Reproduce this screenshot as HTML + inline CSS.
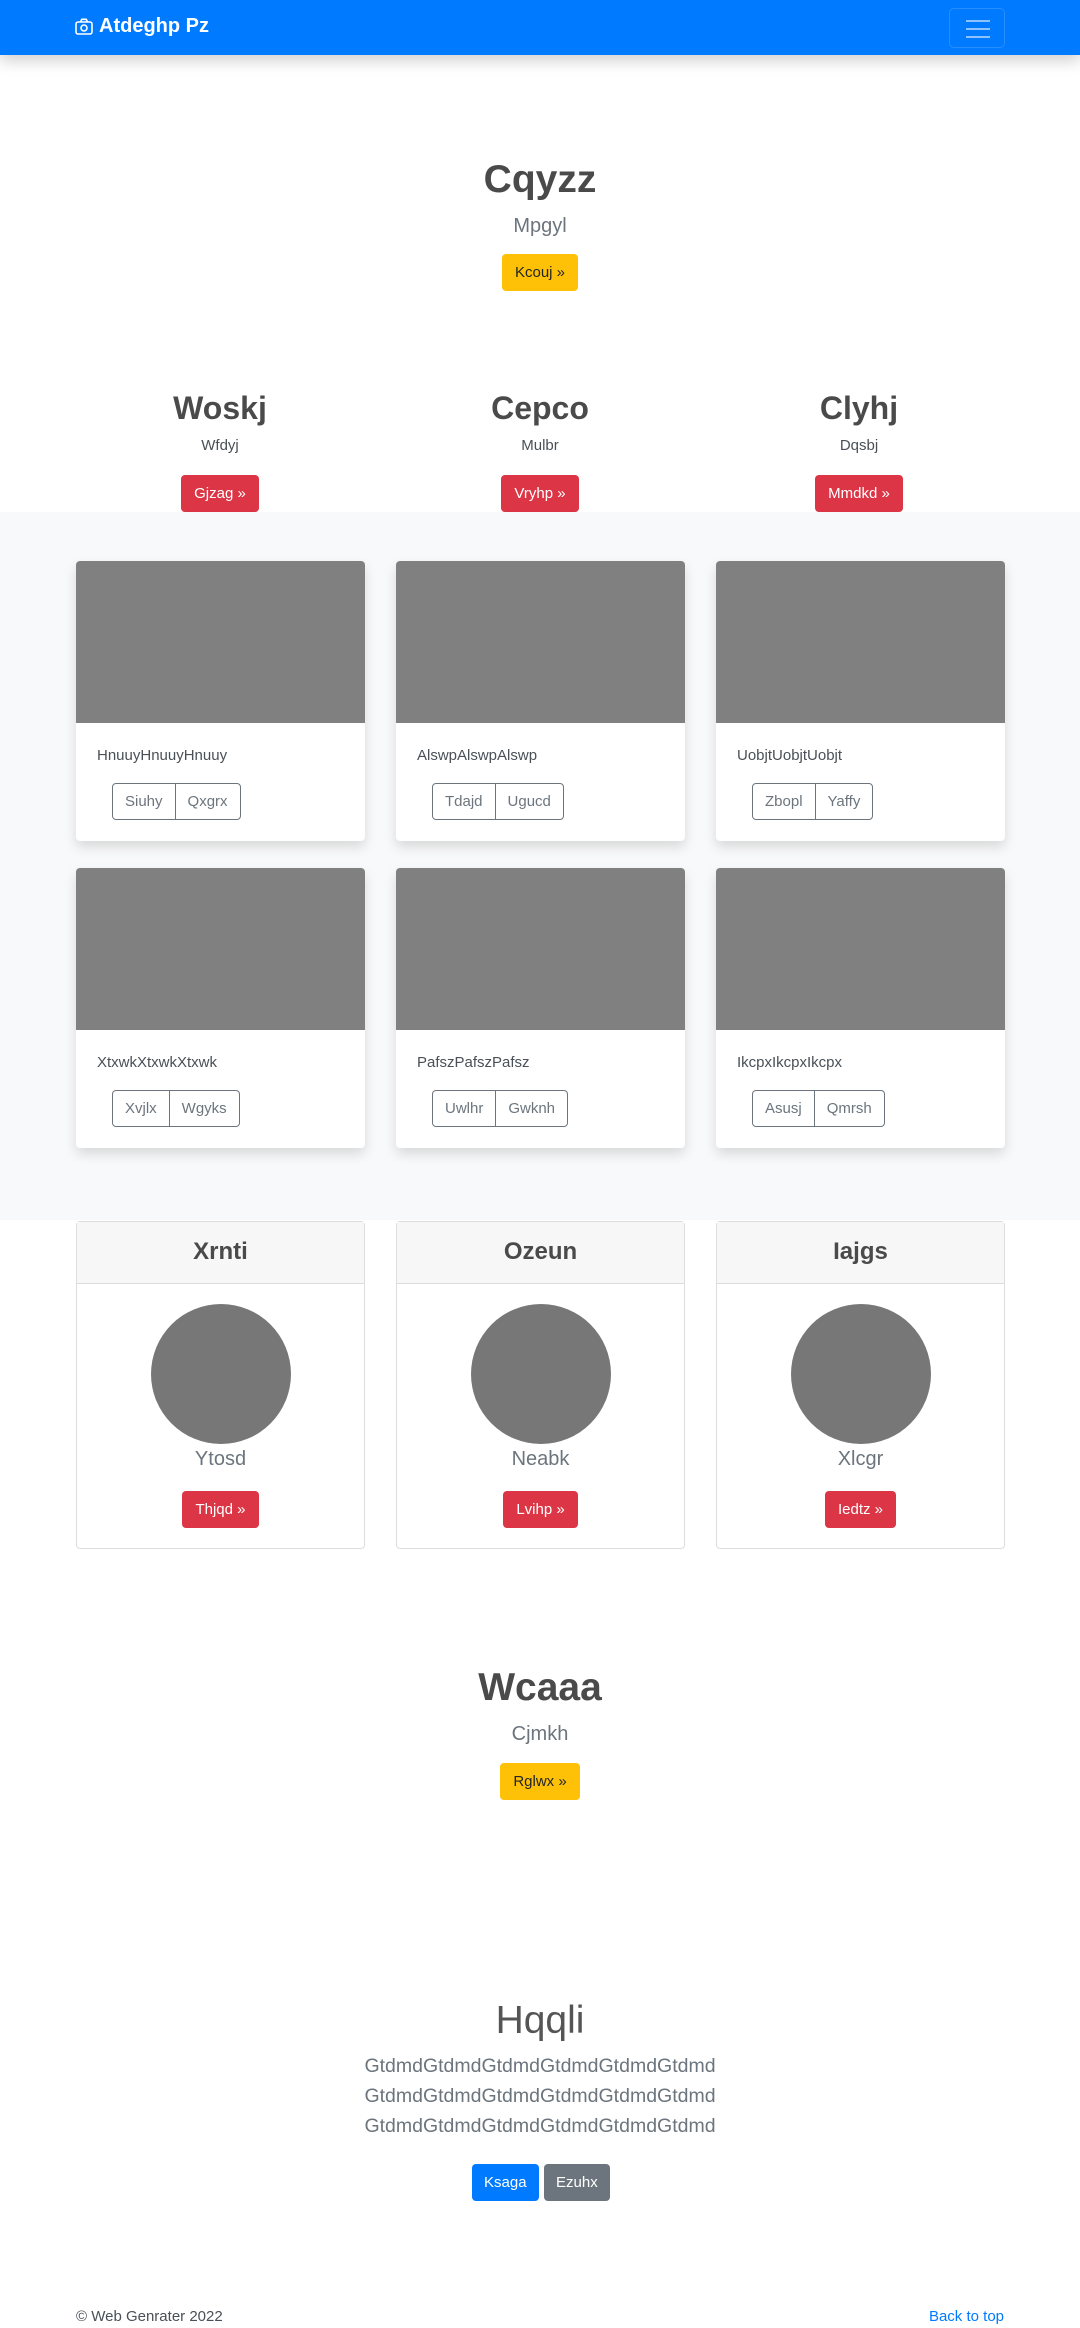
<!DOCTYPE html>
<html><head><meta charset="utf-8">
<style>
*{box-sizing:border-box;margin:0;padding:0}
body{width:1080px;height:2328px;overflow:hidden;background:#fff;font-family:"Liberation Sans",sans-serif;color:#212529;position:relative}
.abs{position:absolute}
.c{text-align:center}
nav{position:absolute;left:0;top:0;width:1080px;height:55px;background:#007bff;box-shadow:0 6px 14px rgba(0,0,0,.18);z-index:5}
.brand{position:absolute;left:75px;top:15px;color:#fff;font-weight:bold;font-size:20px;display:flex;align-items:center;gap:6px}
.tog{position:absolute;left:949px;top:8px;width:56px;height:40px;border:1px solid rgba(255,255,255,.15);border-radius:5px}
.tog i{position:absolute;left:16px;width:24px;height:2px;background:rgba(255,255,255,.55)}
.btn{display:inline-block;border-radius:4px;font-size:15px;line-height:37px;height:37px;padding:0 13px}
.y{background:#ffc107;color:#212529}
.r{background:#dc3545;color:#fff}
.h1{font-size:39px;font-weight:bold;color:#4a4a4a}
.lead{font-size:20px;color:#6c757d;font-weight:300}
.h2{font-size:32px;font-weight:bold;color:#4a4a4a}
.gray{position:absolute;left:0;top:512px;width:1080px;height:708px;background:#f8f9fa}
.card{position:absolute;width:289px;height:280px;background:#fff;border-radius:4px;box-shadow:0 6px 12px rgba(0,0,0,.13);overflow:hidden}
.card .img{height:162px;background:#808080}
.card .t{position:absolute;left:21px;top:186px;font-size:15px;color:#495057}
.bg{position:absolute;left:36px;top:222px;display:flex;height:37px;border:1px solid #6c757d;border-radius:4px}
.bg span{padding:0 12px;line-height:35px;font-size:15px;color:#6c757d}
.bg span+span{border-left:1px solid #6c757d}
.tc{position:absolute;top:1221px;width:289px;height:328px;border:1px solid #ddd;border-radius:4px;background:#fff}
.tc .hd{height:62px;background:#f7f7f7;border-bottom:1px solid #ddd;text-align:center;line-height:60px;font-size:24px;font-weight:bold;color:#4a4a4a}
.tc .cir{position:absolute;left:74px;top:82px;width:140px;height:140px;border-radius:50%;background:#777}
.tc .nm{position:absolute;left:0;width:100%;top:226px;text-align:center;font-size:20px;color:#6c757d;font-weight:300}
.tc .bt{position:absolute;top:269px;left:0;width:100%;text-align:center}
</style></head><body>
<nav>
<div class="brand"><svg width="18" height="17" viewBox="0 0 18 17" fill="none" stroke="#fff" stroke-width="1.6"><rect x="1" y="4" width="16" height="12" rx="2"/><path d="M5.5 4 L6.8 1.3 H11.2 L12.5 4"/><circle cx="9" cy="10" r="3"/></svg>Atdeghp Pz</div>
<div class="tog"><i style="top:11px"></i><i style="top:19px"></i><i style="top:27px"></i></div>
</nav>

<div class="abs c h1" style="left:0;width:1080px;top:158px">Cqyzz</div>
<div class="abs c lead" style="left:0;width:1080px;top:215px">Mpgyl</div>
<div class="abs c" style="left:0;width:1080px;top:254px"><span class="btn y">Kcouj »</span></div>

<div class="abs c h2" style="left:60px;width:320px;top:390px">Woskj</div>
<div class="abs c h2" style="left:380px;width:320px;top:390px">Cepco</div>
<div class="abs c h2" style="left:699px;width:320px;top:390px">Clyhj</div>
<div class="abs c" style="left:60px;width:320px;top:437px;font-size:15px;color:#495057">Wfdyj</div>
<div class="abs c" style="left:380px;width:320px;top:437px;font-size:15px;color:#495057">Mulbr</div>
<div class="abs c" style="left:699px;width:320px;top:437px;font-size:15px;color:#495057">Dqsbj</div>
<div class="abs c" style="left:60px;width:320px;top:475px"><span class="btn r">Gjzag »</span></div>
<div class="abs c" style="left:380px;width:320px;top:475px"><span class="btn r">Vryhp »</span></div>
<div class="abs c" style="left:699px;width:320px;top:475px"><span class="btn r">Mmdkd »</span></div>

<div class="gray"></div>
<div class="card" style="left:76px;top:561px"><div class="img"></div><div class="t">HnuuyHnuuyHnuuy</div><div class="bg"><span>Siuhy</span><span>Qxgrx</span></div></div>
<div class="card" style="left:396px;top:561px"><div class="img"></div><div class="t">AlswpAlswpAlswp</div><div class="bg"><span>Tdajd</span><span>Ugucd</span></div></div>
<div class="card" style="left:716px;top:561px"><div class="img"></div><div class="t">UobjtUobjtUobjt</div><div class="bg"><span>Zbopl</span><span>Yaffy</span></div></div>
<div class="card" style="left:76px;top:868px"><div class="img"></div><div class="t">XtxwkXtxwkXtxwk</div><div class="bg"><span>Xvjlx</span><span>Wgyks</span></div></div>
<div class="card" style="left:396px;top:868px"><div class="img"></div><div class="t">PafszPafszPafsz</div><div class="bg"><span>Uwlhr</span><span>Gwknh</span></div></div>
<div class="card" style="left:716px;top:868px"><div class="img"></div><div class="t">IkcpxIkcpxIkcpx</div><div class="bg"><span>Asusj</span><span>Qmrsh</span></div></div>

<div class="tc" style="left:76px"><div class="hd">Xrnti</div><div class="cir"></div><div class="nm">Ytosd</div><div class="bt"><span class="btn r">Thjqd »</span></div></div>
<div class="tc" style="left:396px"><div class="hd">Ozeun</div><div class="cir"></div><div class="nm">Neabk</div><div class="bt"><span class="btn r">Lvihp »</span></div></div>
<div class="tc" style="left:716px"><div class="hd">Iajgs</div><div class="cir"></div><div class="nm">Xlcgr</div><div class="bt"><span class="btn r">Iedtz »</span></div></div>

<div class="abs c h1" style="left:0;width:1080px;top:1666px">Wcaaa</div>
<div class="abs c lead" style="left:0;width:1080px;top:1723px">Cjmkh</div>
<div class="abs c" style="left:0;width:1080px;top:1763px"><span class="btn y">Rglwx »</span></div>

<div class="abs c" style="left:0;width:1080px;top:1999px;font-size:39px;font-weight:300;color:#555">Hqqli</div>
<div class="abs c lead" style="left:0;width:1080px;top:2051px;line-height:30px;font-size:19.5px">GtdmdGtdmdGtdmdGtdmdGtdmdGtdmd<br>GtdmdGtdmdGtdmdGtdmdGtdmdGtdmd<br>GtdmdGtdmdGtdmdGtdmdGtdmdGtdmd</div>
<div class="abs" style="left:472px;top:2164px"><span class="btn" style="background:#007bff;color:#fff;padding:0 12px">Ksaga</span></div>
<div class="abs" style="left:544px;top:2164px"><span class="btn" style="background:#6c757d;color:#fff;padding:0 12px">Ezuhx</span></div>

<div class="abs" style="left:76px;top:2308px;font-size:15px;color:#495057">© Web Genrater 2022</div>
<div class="abs" style="right:76px;top:2308px;font-size:15px;color:#007bff">Back to top</div>
</body></html>
